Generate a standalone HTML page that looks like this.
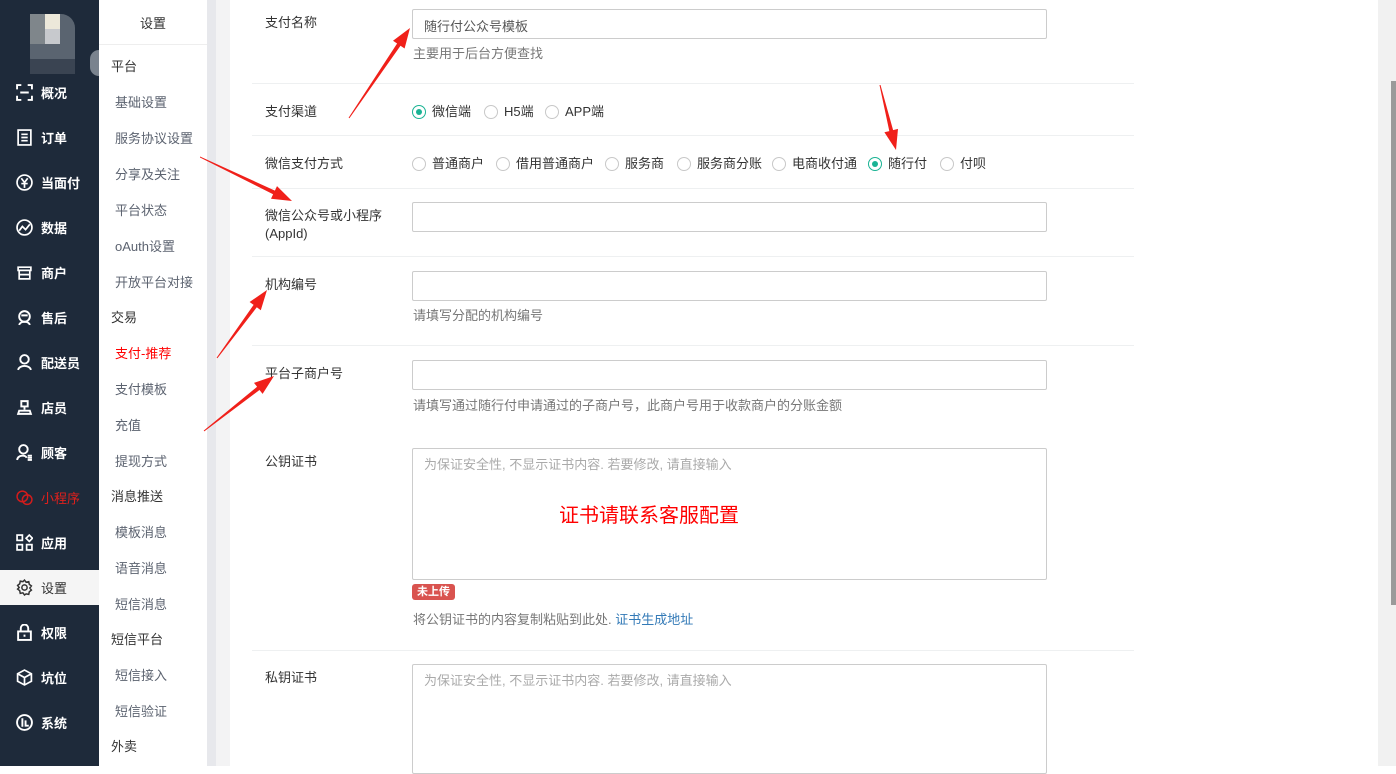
<!DOCTYPE html>
<html><head><meta charset="utf-8"><style>
*{margin:0;padding:0;box-sizing:border-box}
body{width:1396px;height:766px;overflow:hidden;background:#fff;font-family:"Liberation Sans","Noto Sans CJK SC",sans-serif;font-size:13px;color:#333;position:relative}
.a{position:absolute}
#side{left:0;top:0;width:99px;height:766px;background:#1e2a3a}
.nav{position:absolute;left:0;width:99px;height:45px;color:#fff;font-size:13px;font-weight:bold;display:flex;align-items:center}
.nav svg{position:absolute;left:16px;width:17px;height:17px}
.nav span{position:absolute;left:41px}
#sub{left:99px;top:0;width:108px;height:766px;background:#fff}
.s1{position:absolute;left:12px;color:#333;font-size:13px}
.s2{position:absolute;left:16px;color:#5c6370;font-size:13px}
.lbl{position:absolute;left:265px;color:#333;font-size:13px;line-height:18px}
.inp{position:absolute;left:412px;width:635px;height:30px;border:1px solid #ccc;background:#fff;border-radius:2px}
.help{position:absolute;left:413px;color:#777;font-size:13px}
.hr{position:absolute;left:252px;width:882px;height:1px;background:#eef0f1}
.r{display:inline-block;width:14px;height:14px;border:1px solid #c8c8c8;border-radius:50%;vertical-align:-3px;margin-right:6px;background:#fff;position:relative}
.r.on{border-color:#1ab394}
.r.on::after{content:"";position:absolute;left:3px;top:3px;width:6px;height:6px;border-radius:50%;background:#1ab394}
.opt{position:absolute;font-size:13px;color:#333;white-space:nowrap}
</style></head><body>
<div class="a" id="side"></div>
<!-- avatar -->
<div class="a" style="left:30px;top:14px;width:45px;height:60px;background:#5a6470;border-radius:12px 14px 10px 16px"></div>
<div class="a" style="left:45px;top:14px;width:15px;height:15px;background:#ece8da"></div>
<div class="a" style="left:45px;top:29px;width:15px;height:15px;background:#c7c9cd"></div>
<div class="a" style="left:30px;top:14px;width:15px;height:30px;background:#7f868b"></div>
<div class="a" style="left:30px;top:59px;width:45px;height:15px;background:#3a4452"></div>
<div class="a" style="left:90px;top:50px;width:9px;height:26px;background:#7a838e;border-radius:10px 0 0 10px"></div>

<div class="nav" style="top:70px"><svg viewBox="0 0 16 16" fill="none" stroke="#fff" stroke-width="1.8"><path d="M1 5V1h4M11 1h4v4M15 11v4h-4M5 15H1v-4M4 8h8"/></svg><span>概况</span></div>
<div class="nav" style="top:115px"><svg viewBox="0 0 16 16" fill="none" stroke="#fff" stroke-width="1.6"><rect x="2" y="1" width="12" height="14"/><path d="M5 5h6M5 8h6M5 11h6"/></svg><span>订单</span></div>
<div class="nav" style="top:160px"><svg viewBox="0 0 16 16" fill="none" stroke="#fff" stroke-width="1.6"><circle cx="8" cy="8" r="7"/><path d="M5 4l3 4 3-4M8 8v5M5 9h6"/></svg><span>当面付</span></div>
<div class="nav" style="top:205px"><svg viewBox="0 0 16 16" fill="none" stroke="#fff" stroke-width="1.6"><circle cx="8" cy="8" r="7"/><path d="M3 11l3-4 3 3 4-5"/></svg><span>数据</span></div>
<div class="nav" style="top:250px"><svg viewBox="0 0 16 16" fill="none" stroke="#fff" stroke-width="1.6"><path d="M2 3h12v3H2zM3 6v8h10V6M3 10h10"/></svg><span>商户</span></div>
<div class="nav" style="top:295px"><svg viewBox="0 0 16 16" fill="none" stroke="#fff" stroke-width="1.8"><circle cx="8" cy="7" r="5"/><path d="M3 15c1-4 9-4 10 0M5 6h6"/></svg><span>售后</span></div>
<div class="nav" style="top:340px"><svg viewBox="0 0 16 16" fill="none" stroke="#fff" stroke-width="1.8"><circle cx="8" cy="5" r="4"/><path d="M2 15c1-5 11-5 12 0"/></svg><span>配送员</span></div>
<div class="nav" style="top:385px"><svg viewBox="0 0 16 16" fill="none" stroke="#fff" stroke-width="1.8"><path d="M5 2h6v5H5zM8 7v3M2 14h12l-1-3H3z"/></svg><span>店员</span></div>
<div class="nav" style="top:430px"><svg viewBox="0 0 16 16" fill="none" stroke="#fff" stroke-width="1.8"><circle cx="7" cy="5" r="4"/><path d="M1 15c1-5 8-5 9-2M11 11h4M11 13h4M11 15h4"/></svg><span>顾客</span></div>
<div class="nav" style="top:475px;color:#e0201c;font-weight:normal"><svg viewBox="0 0 16 16" fill="none" stroke="#d21c1c" stroke-width="1.4"><circle cx="6" cy="7" r="5"/><circle cx="10.5" cy="10" r="4.5"/></svg><span>小程序</span></div>
<div class="nav" style="top:520px"><svg viewBox="0 0 16 16" fill="none" stroke="#fff" stroke-width="1.6"><rect x="1" y="1" width="5" height="5"/><rect x="1" y="10" width="5" height="5"/><rect x="10" y="10" width="5" height="5"/><path d="M12.5 1l3 3-3 3-3-3z"/></svg><span>应用</span></div>
<div class="a" style="left:0;top:570px;width:99px;height:35px;background:#f5f5f5"></div>
<div class="nav" style="top:565px;color:#333;font-weight:normal"><svg viewBox="0 0 16 16" fill="none" stroke="#333" stroke-width="1.4"><circle cx="8" cy="8" r="2.5"/><path d="M8 1l1.5 2 2.5-.5.5 2.5 2 1.5-1.5 2 1.5 2-2 1.5-.5 2.5-2.5-.5L8 15l-1.5-2-2.5.5-.5-2.5-2-1.5L3 8 1.5 6l2-1.5.5-2.5 2.5.5z"/></svg><span>设置</span></div>
<div class="nav" style="top:610px"><svg viewBox="0 0 16 16" fill="none" stroke="#fff" stroke-width="1.8"><rect x="2" y="7" width="12" height="8"/><path d="M4.5 7V4a3.5 3.5 0 017 0v3M8 10v2"/></svg><span>权限</span></div>
<div class="nav" style="top:655px"><svg viewBox="0 0 16 16" fill="none" stroke="#fff" stroke-width="1.6"><path d="M8 1l6.5 3.5v7L8 15l-6.5-3.5v-7zM1.5 4.5L8 8l6.5-3.5M8 8v7"/></svg><span>坑位</span></div>
<div class="nav" style="top:700px"><svg viewBox="0 0 16 16" fill="none" stroke="#fff" stroke-width="1.8"><circle cx="8" cy="8" r="7"/><path d="M6 4v8M9 6v5h3"/></svg><span>系统</span></div>

<div class="a" id="sub"></div>
<div class="a" style="left:99px;top:44px;width:108px;height:1px;background:#eee"></div>
<div class="a" style="left:140px;top:13px;font-size:13px;color:#333">设置</div>
<div class="s1" style="left:111px;top:56px">平台</div>
<div class="s2" style="left:115px;top:92px">基础设置</div>
<div class="s2" style="left:115px;top:128px">服务协议设置</div>
<div class="s2" style="left:115px;top:164px">分享及关注</div>
<div class="s2" style="left:115px;top:200px">平台状态</div>
<div class="s2" style="left:115px;top:236px">oAuth设置</div>
<div class="s2" style="left:115px;top:272px">开放平台对接</div>
<div class="s1" style="left:111px;top:307px">交易</div>
<div class="s2" style="left:115px;top:343px;color:#f00">支付-推荐</div>
<div class="s2" style="left:115px;top:379px">支付模板</div>
<div class="s2" style="left:115px;top:415px">充值</div>
<div class="s2" style="left:115px;top:451px">提现方式</div>
<div class="s1" style="left:111px;top:486px">消息推送</div>
<div class="s2" style="left:115px;top:522px">模板消息</div>
<div class="s2" style="left:115px;top:558px">语音消息</div>
<div class="s2" style="left:115px;top:594px">短信消息</div>
<div class="s1" style="left:111px;top:629px">短信平台</div>
<div class="s2" style="left:115px;top:665px">短信接入</div>
<div class="s2" style="left:115px;top:701px">短信验证</div>
<div class="s1" style="left:111px;top:736px">外卖</div>

<div class="a" style="left:207px;top:0;width:9px;height:766px;background:#e7e8ec"></div>
<div class="a" style="left:216px;top:0;width:14px;height:766px;background:#f3f3f4"></div>
<div class="a" style="left:1378px;top:0;width:18px;height:766px;background:#f1f1f1"></div>
<div class="a" style="left:1391px;top:81px;width:5px;height:524px;background:#9a9a9a"></div>

<div class="lbl" style="top:14px">支付名称</div>
<div class="inp" style="top:9px"><span style="position:absolute;left:11px;top:6px;color:#555">随行付公众号模板</span></div>
<div class="help" style="top:43px">主要用于后台方便查找</div>
<div class="hr" style="top:83px"></div>
<div class="lbl" style="top:103px">支付渠道</div>
<div class="opt" style="left:412px;top:101px"><i class="r on"></i>微信端</div>
<div class="opt" style="left:484px;top:101px"><i class="r"></i>H5端</div>
<div class="opt" style="left:545px;top:101px"><i class="r"></i>APP端</div>
<div class="hr" style="top:135px"></div>
<div class="lbl" style="top:155px">微信支付方式</div>
<div class="opt" style="left:412px;top:153px"><i class="r"></i>普通商户</div>
<div class="opt" style="left:496px;top:153px"><i class="r"></i>借用普通商户</div>
<div class="opt" style="left:605px;top:153px"><i class="r"></i>服务商</div>
<div class="opt" style="left:677px;top:153px"><i class="r"></i>服务商分账</div>
<div class="opt" style="left:772px;top:153px"><i class="r"></i>电商收付通</div>
<div class="opt" style="left:868px;top:153px"><i class="r on"></i>随行付</div>
<div class="opt" style="left:940px;top:153px"><i class="r"></i>付呗</div>
<div class="hr" style="top:188px"></div>
<div class="lbl" style="top:207px">微信公众号或小程序<br>(AppId)</div>
<div class="inp" style="top:202px"></div>
<div class="hr" style="top:256px"></div>
<div class="lbl" style="top:276px">机构编号</div>
<div class="inp" style="top:271px"></div>
<div class="help" style="top:305px">请填写分配的机构编号</div>
<div class="hr" style="top:345px"></div>
<div class="lbl" style="top:365px">平台子商户号</div>
<div class="inp" style="top:360px"></div>
<div class="help" style="top:395px">请填写通过随行付申请通过的子商户号，此商户号用于收款商户的分账金额</div>
<div class="lbl" style="top:453px">公钥证书</div>
<div class="inp" style="top:448px;height:132px"><span style="position:absolute;left:11px;top:5px;color:#aaa">为保证安全性, 不显示证书内容. 若要修改, 请直接输入</span></div>
<div class="a" style="left:559px;top:499px;color:#f00;font-size:20px">证书请联系客服配置</div>
<div class="a" style="left:412px;top:584px;background:#d9534f;color:#fff;font-size:11px;font-weight:bold;padding:1px 5px;border-radius:3px;line-height:14px">未上传</div>
<div class="help" style="top:609px">将公钥证书的内容复制粘贴到此处. <span style="color:#337ab7">证书生成地址</span></div>
<div class="hr" style="top:650px"></div>
<div class="lbl" style="top:669px">私钥证书</div>
<div class="inp" style="top:664px;height:110px"><span style="position:absolute;left:11px;top:5px;color:#aaa">为保证安全性, 不显示证书内容. 若要修改, 请直接输入</span></div>

<svg class="a" style="left:0;top:0" width="1396" height="766">
<g fill="#f0201a">
<polygon points="349.4,118.3 400.5,45.7 404.6,48.5 410,28 393,40.7 397.1,43.5 348.6,117.7"/>
<polygon points="880.5,85 893.1,130.1 898,128.9 896,150 884.4,132.3 889.3,131.1 879.5,85"/>
<polygon points="200,157.5 273.1,194.2 271,198.7 292,201 277,186.1 274.9,190.6 200,156.5"/>
<polygon points="217.4,358.3 256.8,307.3 260.8,310.2 267,290 249.6,302 253.6,304.9 216.6,357.7"/>
<polygon points="204.3,431.4 259.5,390 262.6,393.9 274,376 254,382.9 257.1,386.8 203.7,430.6"/>
</g></svg>
</body></html>
